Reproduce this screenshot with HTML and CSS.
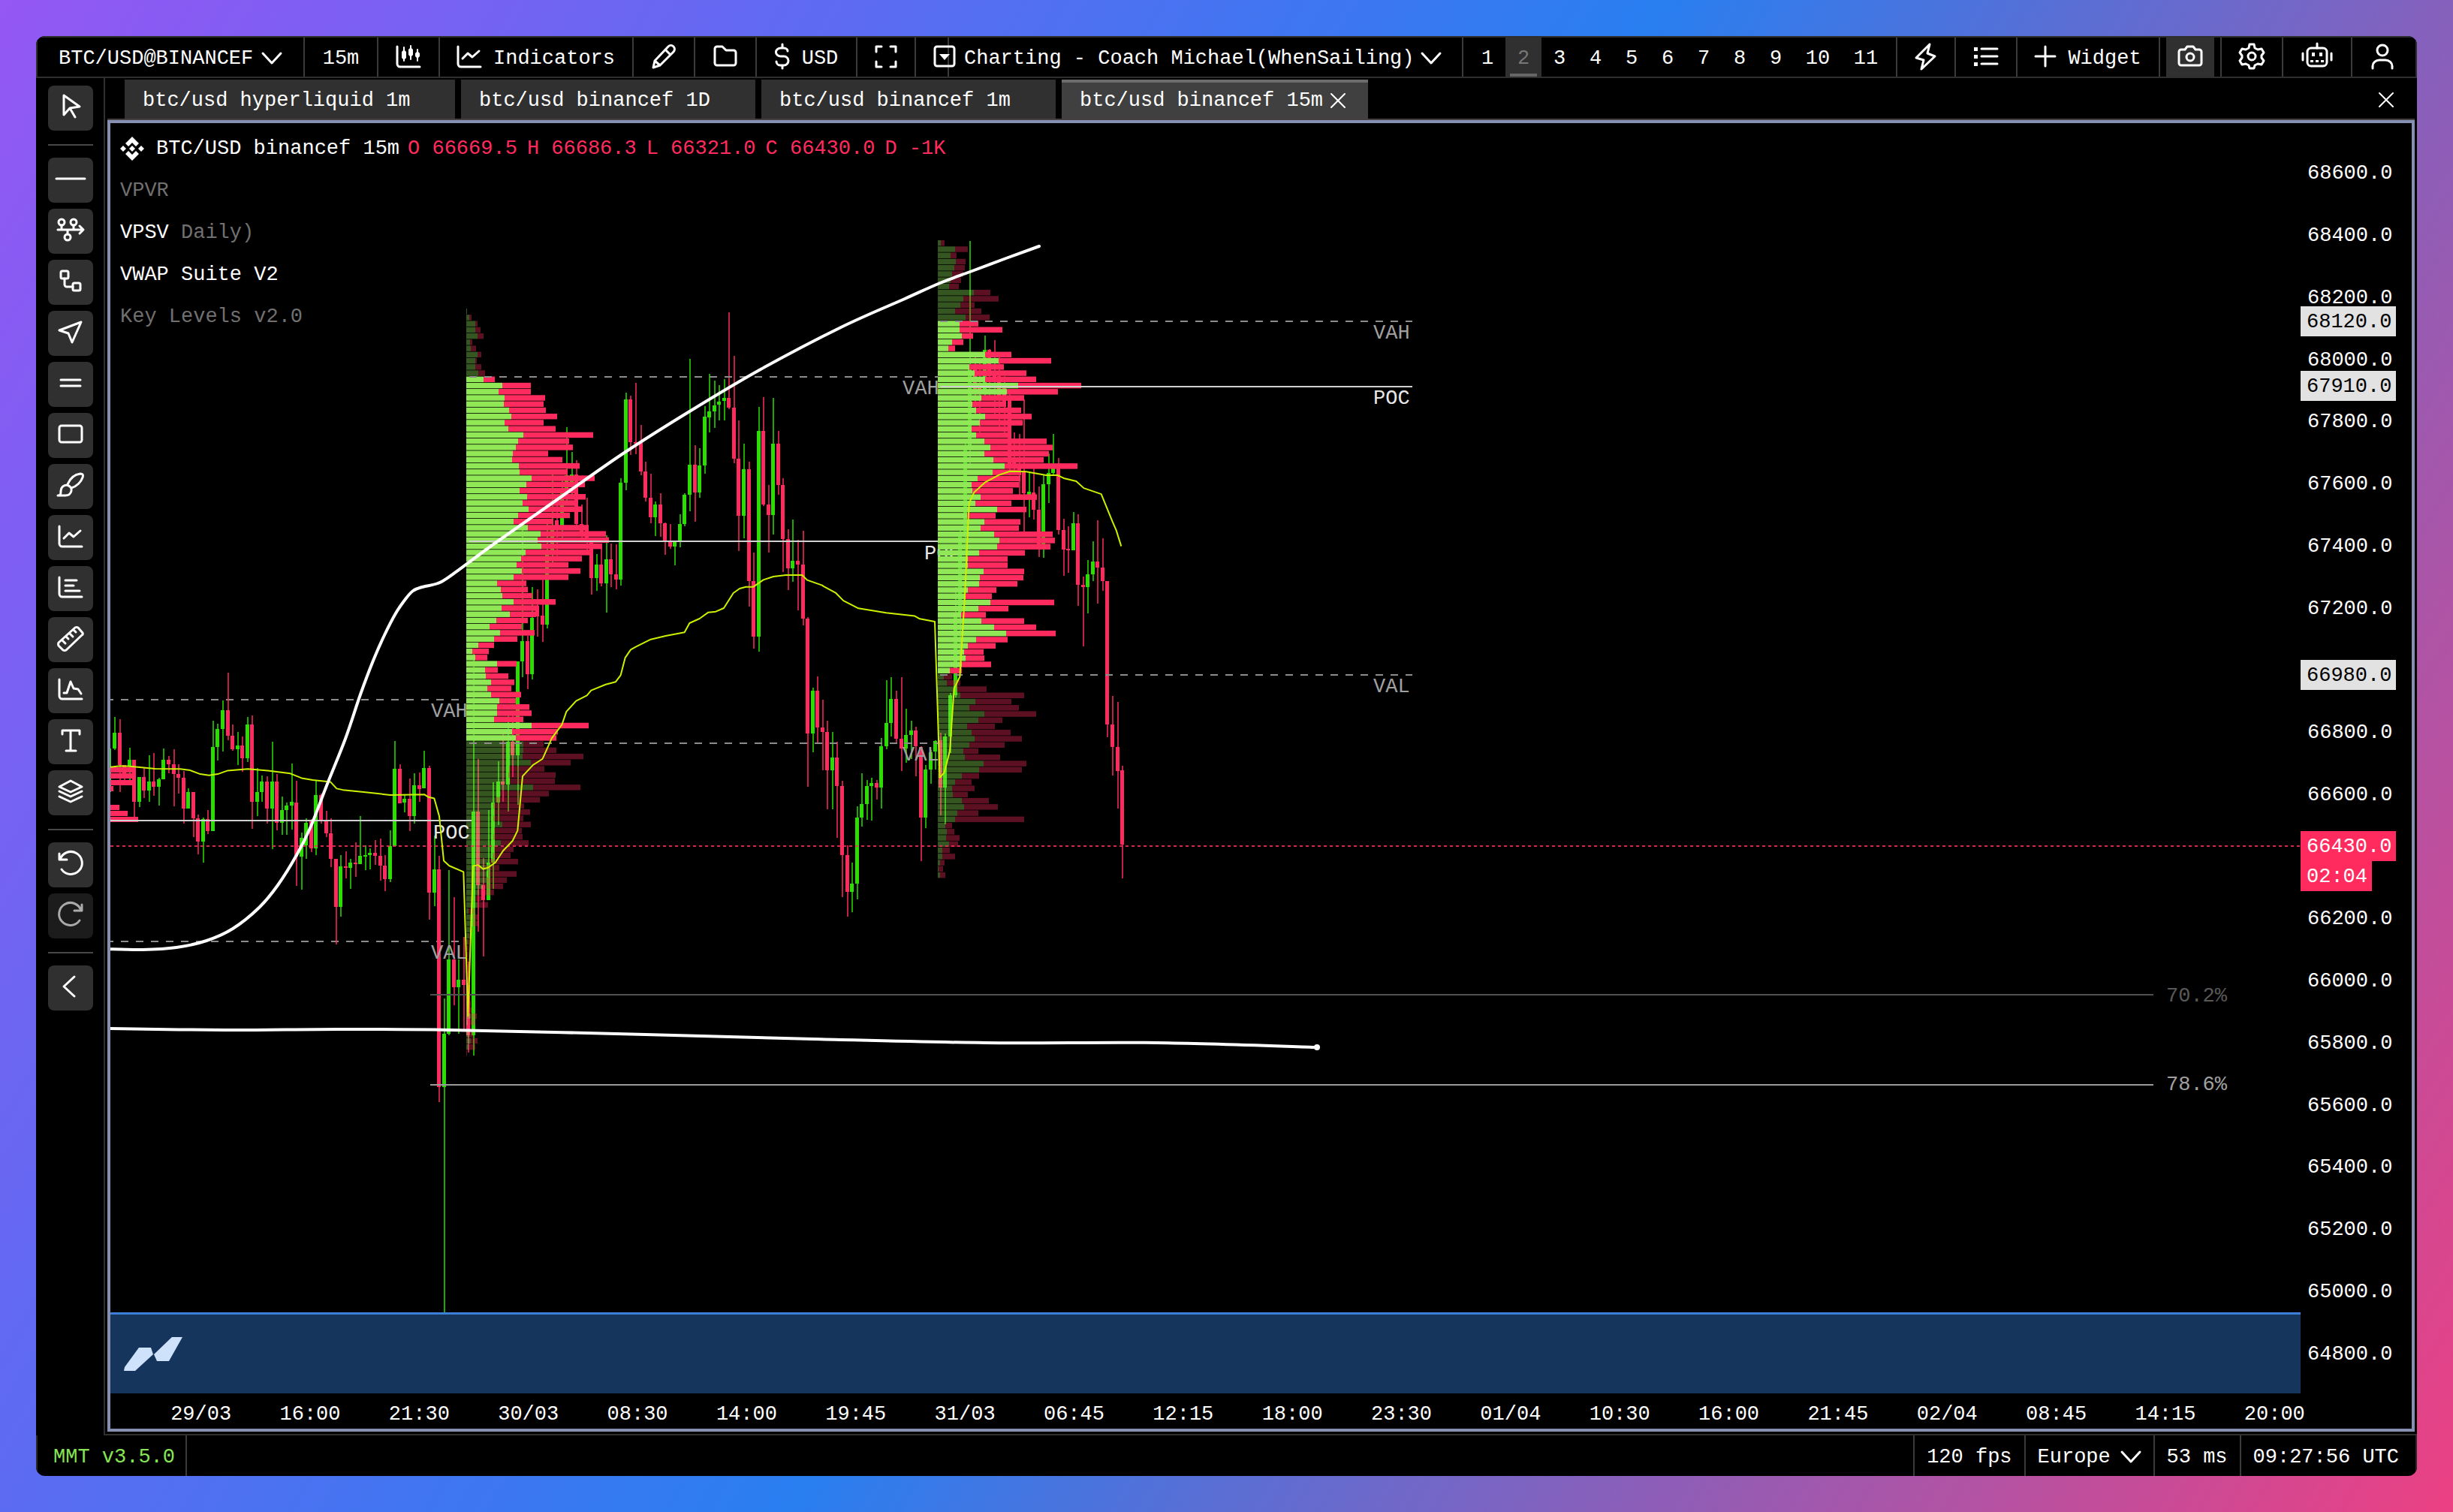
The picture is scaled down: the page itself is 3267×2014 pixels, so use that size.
FILE: index.html
```html
<!DOCTYPE html>
<html lang="en">
<head>
<meta charset="utf-8">
<title>BTC/USD binancef 15m</title>
<link rel="stylesheet" href="styles.css">
</head>
<body>
<svg class="sprite" aria-hidden="true">
  <symbol id="i-chevron" viewBox="0 0 28 16"><path d="M2 1l12 13L26 1"/></symbol>
  <symbol id="i-close" viewBox="0 0 20 20"><path d="M1 1l18 18M19 1L1 19"/></symbol>
  <symbol id="i-candles" viewBox="0 0 32 32"><path d="M1 0v23a4 4 0 0 0 4 4h26"/><path class="thin" d="M10 1v18M19-1v18M28 4v15"/><path class="solid" d="M10 4l3 3v8l-3 3-3-3V7zM19 1l3 3v7l-3 3-3-3V4zM28 6l3 3v4l-3 3-3-3V9z"/></symbol>
  <symbol id="i-line-chart" viewBox="0 0 32 32"><path d="M1 0v23a4 4 0 0 0 4 4h26M7 16l7-7 6 5 9-8"/></symbol>
  <symbol id="i-pencil" viewBox="0 0 32 32"><path d="M2 28l2-9L22 0a4 4 0 0 1 7 7L11 25zM18 4l7 7M4 19l7 6"/></symbol>
  <symbol id="i-folder" viewBox="0 0 32 32"><path d="M5 0h7l5 5h10a3 3 0 0 1 3 3v14a3 3 0 0 1-3 3H5a3 3 0 0 1-3-3V3a3 3 0 0 1 3-3z"/></symbol>
  <symbol id="i-dollar" viewBox="0 0 20 32"><path d="M10-3v5M10 25v4M17 6a5 4 0 0 0-5-4H8a6 5 0 0 0 0 11h4a6 6 0 0 1 0 12H7a5 5 0 0 1-5-5"/></symbol>
  <symbol id="i-frame" viewBox="0 0 28 32"><path d="M1 7V0h7M20 0h7v7M27 20v7h-7M8 27H1v-7"/></symbol>
  <symbol id="i-layout" viewBox="0 0 28 32"><rect x="1" y="0" width="26" height="26" rx="3"/><path class="solid" d="M7 10h14l-7 8z"/></symbol>
  <symbol id="i-bolt" viewBox="0 0 32 32"><path d="M21-3L3 15l10 3-3 12 18-17-10-4z"/></symbol>
  <symbol id="i-list" viewBox="0 0 32 32"><path d="M10 3h21M10 13h21M10 23h21"/><path class="solid" d="M0 1h5v5H0zM0 11h5v5H0zM0 21h5v5H0z"/></symbol>
  <symbol id="i-plus" viewBox="0 0 28 32"><path d="M14 0v26M1 13h26"/></symbol>
  <symbol id="i-camera" viewBox="0 0 32 32"><path d="M4 4h5l3-4h8l3 4h5a3 3 0 0 1 3 3v15a3 3 0 0 1-3 3H4a3 3 0 0 1-3-3V7a3 3 0 0 1 3-3z"/><circle cx="16" cy="14" r="5"/></symbol>
  <symbol id="i-gear" viewBox="0 0 32 32"><path d="M13-3h6l1 5 4 2 5-1 3 5-3 4v3l3 4-3 5-5-1-4 2-1 4h-6l-1-4-4-2-5 1-3-5 3-4v-3L0 8l3-5 5 1 4-2z"/><circle cx="16" cy="13" r="5"/></symbol>
  <symbol id="i-robot" viewBox="0 0 40 32"><rect x="7" y="2" width="26" height="24" rx="5"/><path d="M20-4v6M1 9v9M39 9v9"/><path class="solid" d="M13 8h4v5h-4zM23 8h4v5h-4zM11 18h4v3h-4zM18 18h4v3h-4zM25 18h4v3h-4z"/></symbol>
  <symbol id="i-user" viewBox="0 0 32 32"><circle cx="16" cy="5" r="7"/><path d="M3 29v-3a9 8 0 0 1 9-8h8a9 8 0 0 1 9 8v3"/></symbol>
  <symbol id="i-cursor" viewBox="0 0 32 32"><path d="M7-2l21 15-13 2-8 9zM15 15l7 12"/></symbol>
  <symbol id="i-hline" viewBox="0 0 40 32"><path d="M1 13h38"/></symbol>
  <symbol id="i-nodes" viewBox="0 0 36 32"><circle cx="6" cy="3" r="4"/><circle cx="22" cy="3" r="4"/><circle cx="14" cy="23" r="4"/><path d="M1 13h33M30 8l5 5-5 5M6 7v6M22 7v6M14 13v6"/></symbol>
  <symbol id="i-elbow" viewBox="0 0 32 32"><rect x="3" y="0" width="10" height="10" rx="2"/><rect x="19" y="16" width="10" height="10" rx="2"/><path d="M8 10v8a3 3 0 0 0 3 3h8"/></symbol>
  <symbol id="i-send" viewBox="0 0 32 32"><path d="M1 11L30 0 18 27l-5-12z"/></symbol>
  <symbol id="i-equals" viewBox="0 0 32 32"><path d="M3 9h26M3 17h26"/></symbol>
  <symbol id="i-rect" viewBox="0 0 32 32"><rect x="1" y="2" width="30" height="22" rx="3"/></symbol>
  <symbol id="i-brush" viewBox="0 0 36 32"><path d="M1 27c4 0 4-2 4-6 0-5 4-8 8-8 4 1 7 4 6 8-1 4-4 6-8 6zM14 12c3-7 9-13 17-14 4 0 4 3 3 5-2 6-8 12-15 14"/></symbol>
  <symbol id="i-bars" viewBox="0 0 32 32"><path d="M1 0v22a4 4 0 0 0 4 4h26M9 4h15M9 11h11M9 18h19"/></symbol>
  <symbol id="i-ruler" viewBox="0 0 36 32"><path d="M2 19L24-1q2-1 4 0l6 7q1 2-1 3L12 29q-2 1-4 0l-6-6q-1-2 0-4zM7 16l4 4M12 11l3 3M17 7l4 4M22 2l3 3"/></symbol>
  <symbol id="i-area" viewBox="0 0 32 32"><path d="M1 0v22a4 4 0 0 0 4 4h26M7 18h4l5-15 4 9 6 1 4 6"/></symbol>
  <symbol id="i-text" viewBox="0 0 32 32"><path d="M5 5V0h23v5M16 0v27M10 27h13"/></symbol>
  <symbol id="i-layers" viewBox="0 0 32 32"><path d="M16-1l15 8-15 7L1 7zM1 13l15 7 15-7M1 20l15 7 15-7"/></symbol>
  <symbol id="i-undo" viewBox="0 0 32 32"><path d="M1 0v8h10M2 8a15 15 0 1 1 2 13"/></symbol>
  <symbol id="i-redo" viewBox="0 0 32 32"><path d="M31 0v8H21M30 8a15 15 0 1 0-2 13"/></symbol>
  <symbol id="i-back" viewBox="0 0 32 32"><path d="M21 0L7 13l14 13"/></symbol>
</svg>

<div class="window">
  <header class="topbar">
    <label class="cell symbol"><select class="picker" aria-label="Symbol"><option>BTC/USD@BINANCEF</option></select><svg class="chevron"><use href="#i-chevron"/></svg></label>
    <button class="cell interval">15m</button>
    <button class="cell" aria-label="Chart type"><svg class="icon"><use href="#i-candles"/></svg></button>
    <button class="cell indicators"><svg class="icon"><use href="#i-line-chart"/></svg>Indicators</button>
    <button class="cell" aria-label="Draw"><svg class="icon"><use href="#i-pencil"/></svg></button>
    <button class="cell" aria-label="Open"><svg class="icon"><use href="#i-folder"/></svg></button>
    <button class="cell currency"><svg class="icon slim"><use href="#i-dollar"/></svg>USD</button>
    <button class="cell tight" aria-label="Full screen"><svg class="icon"><use href="#i-frame"/></svg></button>
    <label class="cell workspace"><svg class="icon mid"><use href="#i-layout"/></svg><select class="picker" aria-label="Workspace"><option>Charting - Coach Michael(WhenSailing)</option></select><svg class="chevron"><use href="#i-chevron"/></svg></label>
    <nav class="pages" aria-label="Pages">
      <button class="page">1</button><button class="page current">2</button><button class="page">3</button><button class="page">4</button><button class="page">5</button><button class="page">6</button><button class="page">7</button><button class="page">8</button><button class="page">9</button><button class="page wide">10</button><button class="page wide">11</button>
    </nav>
    <button class="cell tight" aria-label="Quick actions"><svg class="icon"><use href="#i-bolt"/></svg></button>
    <button class="cell" aria-label="List"><svg class="icon"><use href="#i-list"/></svg></button>
    <button class="cell widget"><svg class="icon mid"><use href="#i-plus"/></svg>Widget</button>
    <button class="cell camera" aria-label="Screenshot"><span class="pressed"><svg class="icon"><use href="#i-camera"/></svg></span></button>
    <button class="cell" aria-label="Settings"><svg class="icon"><use href="#i-gear"/></svg></button>
    <button class="cell robot" aria-label="Assistant"><svg class="icon broad"><use href="#i-robot"/></svg></button>
    <button class="cell last" aria-label="Account"><svg class="icon"><use href="#i-user"/></svg></button>
  </header>

  <div class="body">
    <aside class="tools">
      <button class="tool" aria-label="Cursor"><svg class="icon"><use href="#i-cursor"/></svg></button>
      <hr class="rule">
      <button class="tool" aria-label="Horizontal line"><svg class="icon broad"><use href="#i-hline"/></svg></button>
      <button class="tool" aria-label="Timeline"><svg class="icon wide"><use href="#i-nodes"/></svg></button>
      <button class="tool" aria-label="Connector"><svg class="icon"><use href="#i-elbow"/></svg></button>
      <button class="tool" aria-label="Arrow"><svg class="icon"><use href="#i-send"/></svg></button>
      <button class="tool" aria-label="Channel"><svg class="icon"><use href="#i-equals"/></svg></button>
      <button class="tool" aria-label="Rectangle"><svg class="icon"><use href="#i-rect"/></svg></button>
      <button class="tool" aria-label="Brush"><svg class="icon wide"><use href="#i-brush"/></svg></button>
      <button class="tool" aria-label="Trend"><svg class="icon"><use href="#i-line-chart"/></svg></button>
      <button class="tool" aria-label="Volume profile"><svg class="icon"><use href="#i-bars"/></svg></button>
      <button class="tool" aria-label="Measure"><svg class="icon wide"><use href="#i-ruler"/></svg></button>
      <button class="tool" aria-label="Anchored VWAP"><svg class="icon"><use href="#i-area"/></svg></button>
      <button class="tool" aria-label="Text"><svg class="icon"><use href="#i-text"/></svg></button>
      <button class="tool" aria-label="Layers"><svg class="icon"><use href="#i-layers"/></svg></button>
      <hr class="rule">
      <button class="tool" aria-label="Undo"><svg class="icon"><use href="#i-undo"/></svg></button>
      <button class="tool" aria-label="Redo" disabled><svg class="icon"><use href="#i-redo"/></svg></button>
      <hr class="rule">
      <button class="tool" aria-label="Collapse"><svg class="icon"><use href="#i-back"/></svg></button>
    </aside>

    <main class="main">
      <div class="tabs">
        <button class="tab first">btc/usd hyperliquid 1m</button>
        <button class="tab">btc/usd binancef 1D</button>
        <button class="tab">btc/usd binancef 1m</button>
        <button class="tab active">btc/usd binancef 15m<svg class="close"><use href="#i-close"/></svg></button>
        <button class="tab-close" aria-label="Close panel"><svg class="close"><use href="#i-close"/></svg></button>
      </div>

      <section class="chart" aria-label="BTC/USD chart">
        <div class="plot">
          <svg class="canvas" viewBox="147 164 2917 1692" preserveAspectRatio="xMinYMin slice">
            <g id="under"></g>
            <g id="candles"></g>
            <g id="profiles"></g>
            <g id="over"></g>
          </svg>
          <div class="legend">
            <p class="row"><svg class="brand" viewBox="0 0 32 32"><path d="M16 0l9 9-4 4-5-5-5 5-4-4zM16 32l9-9-4-4-5 5-5-5-4 4zM16 12l4 4-4 4-4-4zM4 12l4 4-4 4-4-4zM28 12l4 4-4 4-4-4z"/></svg><span class="name">BTC/USD binancef 15m</span><span class="ohlc"><span>O 66669.5</span><span>H 66686.3</span><span>L 66321.0</span><span>C 66430.0</span><span>D -1K</span></span></p>
            <p class="row muted">VPVR</p>
            <p class="row">VPSV&nbsp;<span class="muted">Daily)</span></p>
            <p class="row">VWAP Suite V2</p>
            <p class="row muted">Key Levels v2.0</p>
          </div>
        </div>
        <div class="price-scale">
          <div class="prices">
            <span>68600.0</span><span>68400.0</span><span>68200.0</span><span>68000.0</span><span>67800.0</span><span>67600.0</span><span>67400.0</span><span>67200.0</span><span></span><span>66800.0</span><span>66600.0</span><span></span><span>66200.0</span><span>66000.0</span><span>65800.0</span><span>65600.0</span><span>65400.0</span><span>65200.0</span><span>65000.0</span><span>64800.0</span>
          </div>
          <span class="tag" style="--price:68120">68120.0</span>
          <span class="tag" style="--price:67910">67910.0</span>
          <span class="tag" style="--price:66980">66980.0</span>
          <div class="tag last-price" style="--price:66430"><span>66430.0</span><span class="countdown">02:04</span></div>
        </div>
        <div class="time-scale">
          <span>29/03</span><span>16:00</span><span>21:30</span><span>30/03</span><span>08:30</span><span>14:00</span><span>19:45</span><span>31/03</span><span>06:45</span><span>12:15</span><span>18:00</span><span>23:30</span><span>01/04</span><span>10:30</span><span>16:00</span><span>21:45</span><span>02/04</span><span>08:45</span><span>14:15</span><span>20:00</span>
        </div>
      </section>
    </main>
  </div>

  <footer class="status">
    <span class="item version">MMT v3.5.0</span>
    <span class="item push">120 fps</span>
    <label class="item region"><select class="picker" aria-label="Region"><option>Europe</option></select><svg class="chevron"><use href="#i-chevron"/></svg></label>
    <span class="item">53 ms</span>
    <span class="item clock">09:27:56 UTC</span>
  </footer>
</div>
<script src="chart.js"></script>
</body>
</html>
```

FILE: styles.css
```css
* { box-sizing: border-box; }

body {
  margin: 0;
  min-height: 100vh;
  padding: 48px;
  display: flex;
  background: linear-gradient(120deg, #9457f4 0%, #297ef0 50%, #ec4083 100%);
  color: #fff;
  font: 27px/32px "Liberation Mono", monospace;
}

button, select {
  font: inherit;
  color: inherit;
  background: none;
  border: 0;
  padding: 0;
  margin: 0;
}

.sprite { position: absolute; width: 0; height: 0; }

.icon, .chevron, .close {
  flex: none;
  fill: none;
  stroke: currentColor;
  stroke-width: 3;
  stroke-linecap: round;
  stroke-linejoin: round;
  overflow: visible;
}
symbol { overflow: visible; }
.solid { fill: currentColor; stroke: none; }
.thin { stroke-width: 2; }
.icon { width: 32px; height: 32px; }
.icon.slim { width: 20px; }
.icon.mid { width: 28px; }
.icon.wide { width: 36px; }
.icon.broad { width: 40px; }
.chevron { width: 28px; height: 16px; }
.close { width: 20px; height: 20px; stroke-width: 2; }
.picker { appearance: none; }

.window {
  flex: 1;
  display: flex;
  flex-direction: column;
  background: #000;
  border-radius: 12px;
  overflow: hidden;
}

/* top bar */
.topbar {
  display: flex;
  height: 56px;
  border: 2px solid #2f2f2f;
}
.cell {
  display: flex;
  align-items: center;
  justify-content: center;
  width: 82px;
  padding: 3px 0 0;
  flex: none;
  border-right: 2px solid #3a3a3a;
}
.cell.symbol { width: 356px; gap: 10px; }
.interval { width: 98px; }
.indicators { width: 258px; gap: 16px; }
.currency { width: 134px; gap: 16px; }
.tight { width: 78px; }
.cell.workspace {
  flex: 1;
  justify-content: flex-start;
  gap: 12px;
  padding-left: 24px;
  background: linear-gradient(#3a3a3a, #3a3a3a) 42px 0 / 2px 100% no-repeat;
}
.workspace .chevron { margin-left: -4px; }
.widget { width: 190px; gap: 16px; }
.robot { width: 92px; }
.cell.last { width: 84px; padding-right: 4px; border-right: 0; }
.cell.camera { padding: 0 8px; }
.pressed {
  flex: 1;
  align-self: stretch;
  display: flex;
  align-items: center;
  justify-content: center;
  padding-top: 3px;
  background: #303030;
}
.pages {
  display: flex;
  padding: 0 8px;
  width: 578px;
  flex: none;
  border-right: 2px solid #3a3a3a;
}
.page { width: 48px; padding-top: 3px; }
.page.wide { width: 64px; }
.page.current {
  color: #777;
  background: linear-gradient(#666, #666) center bottom / 36px 4px no-repeat #303030;
}

/* drawing tools */
.body { flex: 1; display: flex; }
.tools {
  width: 92px;
  padding: 10px 14px 10px 16px;
  display: flex;
  flex-direction: column;
  gap: 8px;
  border-right: 2px solid #303030;
}
.tool {
  width: 60px;
  height: 60px;
  padding-top: 2px;
  display: flex;
  align-items: center;
  justify-content: center;
  border-radius: 8px;
  background: #303030;
}
.tool:disabled { background: #1c1c1c; color: #aaa; }
.rule {
  width: 60px;
  height: 2px;
  margin: 10px 0 8px;
  border: 0;
  background: #484848;
}

/* tabs */
.main {
  flex: 1;
  display: flex;
  flex-direction: column;
  min-width: 0;
  padding: 0 3px 3px;
  border-bottom: 2px solid #303030;
}
.tabs {
  display: flex;
  gap: 8px;
  height: 56px;
  padding: 2px 0 0 23px;
  border-bottom: 2px solid #443f3f;
}
.tab {
  width: 392px;
  padding: 3px 24px 0;
  display: flex;
  align-items: center;
  gap: 12px;
  background: #303030;
  white-space: nowrap;
}
.tab.first { width: 440px; }
.tab.active {
  width: 408px;
  gap: 10px;
  background: linear-gradient(#6c6c6c, #6c6c6c) 0 0 / 100% 4px no-repeat #404040;
}
.tab-close { margin-left: auto; width: 76px; padding-top: 2px; display: flex; align-items: center; justify-content: center; }

/* chart */
.chart {
  flex: 1;
  display: grid;
  grid-template: minmax(0, 1fr) 47px / minmax(0, 1fr) 148px;
  border: 4px solid #8590b2;
}
.plot { position: relative; min-height: 1000px; }
.canvas { position: absolute; inset: 0; width: 100%; height: 100%; overflow: hidden; }
.legend { position: relative; padding: 6px 0 0 13px; }
.row { margin: 0; height: 56px; display: flex; align-items: center; }
.brand { width: 32px; height: 32px; margin-right: 16px; fill: #fff; }
.name { margin-right: 11px; }
.ohlc { display: flex; gap: 13px; color: #ff2b5e; }
.muted { color: #707070; }

.price-scale { position: relative; }
.prices {
  height: 100%;
  padding: 26px 0 11px 9px;
  display: grid;
  grid-template-rows: repeat(20, 1fr);
  align-items: center;
}
.tag {
  position: absolute;
  left: 0;
  top: calc((68757 - var(--price)) / 4090 * 100% - 20px);
  width: 127px;
  height: 40px;
  padding: 5px 0 0 8px;
  background: #e2e2e2;
  color: #000;
}
.last-price { background: #ff2b5e; color: #fff; }
.countdown {
  display: block;
  width: 95px;
  height: 40px;
  margin: 3px 0 0 -8px;
  padding: 5px 0 0 8px;
  background: #ff2b5e;
}
.time-scale {
  grid-column: 1 / 3;
  display: grid;
  grid-template-columns: repeat(20, 1fr);
  padding: 12px 110px 0 48px;
  text-align: center;
}

/* drawn series */
.up { fill: #2bdd00; }
.down { fill: #ff2b5e; }
.wick { opacity: .75; }
.buy { fill: #90e857; }
.sell { fill: #ff2b5e; }
.outside { opacity: .37; }
.level { stroke: #d0d0d0; stroke-width: 2; }
.level.dashed { stroke: #8c8c8c; stroke-dasharray: 10 10; stroke-width: 2; }
.level.faint { stroke: #505050; stroke-width: 2; }
.level.soft { stroke: #9a9a9a; stroke-width: 2; }
.level.price { stroke: #ff2b5e; stroke-width: 2; stroke-dasharray: 4 4; opacity: .85; }
.mark { fill: #a0a0a0; }
.mark.bright { fill: #e8e8e8; }
.mark.faint { fill: #585858; }
.average { fill: none; stroke: #cdf000; stroke-width: 2; stroke-linejoin: round; }
.trend { fill: none; stroke: #fff; stroke-width: 4; stroke-linejoin: round; stroke-linecap: round; }
.tip { fill: #fff; }
.band { fill: #16355c; }
.band-edge { fill: #3d7fd6; }
.logo { fill: #cfe2fb; }

/* status bar */
.status {
  display: flex;
  height: 54px;
  border: solid #2a2a2a;
  border-width: 0 2px;
}
.item {
  display: flex;
  align-items: center;
  padding: 3px 16px 0;
  border-right: 2px solid #3a3a3a;
}
.version { padding-left: 21px; padding-right: 14px; color: #86e455; }
.push { margin-left: auto; border-left: 2px solid #3a3a3a; }
.region { gap: 12px; }
.clock { padding-right: 22px; border-right: 0; }
```

FILE: chart.js
```js
const NS = "http://www.w3.org/2000/svg";

function add(parent, tag, attrs, text) {
  const el = document.createElementNS(NS, tag);
  for (const key in attrs) el.setAttribute(key, attrs[key]);
  if (text) el.textContent = text;
  document.getElementById(parent).appendChild(el);
}

// Each block holds its own vertical origin and scale.
// A row is: direction, high, body top, body bottom, low.
const blocks = [
  { first: -1, y: 880, k: 2.8, rows: `
u 262 327 490 490|u 209 270 327 332|d 217 270 390 490|d 388 390 440 460|u 324 370 395 460|d 370 370 525 590|u 434 434 525 545|d 397 434 484 512|u 353 452 484 525|d 345 452 469 504|u 436 442 469 539|u 327 370 441 441|d 356 370 386 420|d 330 386 423 543|d 385 423 438 495|d 412 438 552 607|u 476 490 552 552|d 490 490 588 657|d 574 588 675 722|u 585 591 675 752|d 556 591 636 647|u 224 321 636 636|u 236 255 321 372|u 147 185 255 339|d 45 185 280 297|d 238 280 330 336|u 267 315 330 388|d 284 315 364 414|u 210 238 364 377|d 205 238 526 627|u 400 489 526 580|u 427 452 489 525|d 431 452 552 607|u 302 452 552 702|d 423 452 604 632|u 508 557 604 650|u 529 540 557 650|u 383 526 541 630|d 447 528 731 839|u 640 660 731 854|u 587 605 690 740|d 590 600 700 715|u 447 500 700 724|d 495 500 600 607|d 560 600 643 657|d 588 643 739 771|d 739 739 919 1057|u 724 767 919 955|d 711 767 773 812|u 740 753 773 851|d 678 753 759 805|u 580 727 759 759|u 689 725 730 780|u 700 717 724 778|d 670 717 727 762|d 664 727 764 819|d 724 764 815 860|u 632 691 815 825|u 299 402 691 691|d 387 402 532 532|u 497 515 529 566|d 440 515 580 635|u 421 465 580 608|d 417 465 478 527|u 337 399 476 476|d 393 399 866 966|u 652 777 866 916|d 728 777 1590 1647|u 1260 1392 1590 2439|u 780 1113 1392 1397|d 882 1113 1217 1285|u 1113 1190 1217 1391|d 1029 1190 1210 1375|d 1124 1210 1397 1461|u -40 563 1396 1472|d 368 563 837 1011|d 737 837 893 1102|u 557 753 893 893|u 453 529 753 852|u 376 451 529 613|d 254 451 462 526|u 194 302 462 563|d 204 302 352 434|u 4 4 352 538` },
  { first: 83, y: 400, k: 3, rows: `
u 880 1362 1443 1505|d 1340 1362 1494 1553|u 1145 1268 1494 1514|d 1156 1220 1262 1343|d 1115 1260 1296 1364|u 880 1000 1296 1310|u 690 900 1000 1060|d 820 880 900 1030|u 720 770 900 960|u 508 700 770 800|u 605 697 740 790|d 640 697 894 900|d 815 894 930 960|d 790 905 960 1000|d 950 960 1111 1175|u 1014 1056 1111 1162|d 980 1056 1131 1143|u 940 1036 1131 1247|d 972 1036 1095 1145|d 976 1095 1117 1155|u 711 730 1117 1140|u 370 396 730 758|d 381 396 568 617|d 330 568 572 616|d 499 570 684 700|d 644 684 788 804|d 692 788 868 892|u 805 816 868 941|d 771 816 891 944|d 889 891 959 1018|d 894 959 984 994|u 962 964 984 1058|u 855 894 962 988|u 771 777 894 902|u 235 657 777 842|d 579 657 768 884|u 592 661 768 789|u 423 465 661 693|u 294 444 467 527|u 320 420 443 510|u 338 404 417 480|u 315 390 403 480|d 48 390 430 435|d 222 430 634 652|d 480 634 861 1001|u 573 674 861 950|d 646 674 1122 1223|d 1007 1122 1345 1391|u 426 523 1345 1403|d 387 523 815 823|d 739 815 857 1007|u 391 572 857 937|d 522 572 738 778|d 710 738 955 1087|d 916 955 1072 1157|u 877 1041 1072 1124|d 958 1041 1055 1238|d 921 1056 1272 1298` },
  { first: 141, y: 400, k: 1.8667, rows: `
d 787 791 1078 1210|u 964 971 1078 1124|d 935 971 1063 1102|d 993 1063 1073 1169|d 1046 1073 1168 1265|u 1074 1137 1168 1266|d 1098 1137 1207 1336|d 1194 1207 1379 1484|d 1355 1379 1471 1532|u 1399 1450 1471 1522|u 1259 1287 1450 1490|u 1176 1253 1287 1309|u 1193 1207 1253 1292|u 1188 1201 1207 1293|d 1193 1201 1211 1242|u 1089 1108 1211 1263|u 944 1051 1108 1117|u 937 991 1051 1084|d 971 991 1090 1102|d 938 1090 1114 1170|u 1016 1080 1114 1149|u 1046 1069 1080 1140|d 1060 1069 1109 1184|d 1108 1110 1286 1395|u 1155 1167 1286 1312|u 1118 1124 1167 1203|u 1094 1096 1122 1166` },
  { first: 168, y: 300, k: 1.7422, rows: `
d 1178 1196 1305 1370|u 1180 1187 1305 1390|u 1085 1090 1187 1225|u 840 900 1090 1095|u 700 720 900 1000|u 500 520 720 760|u 37 330 520 560|d 300 330 380 450|d 320 370 390 480|u 256 290 390 400|d 288 290 350 400|d 267 340 360 440|d 300 350 400 470|d 350 370 420 480|d 390 400 560 580|d 480 540 560 575|d 484 560 570 626|d 405 570 622 710|u 575 619 626 678|d 565 620 660 683|d 606 660 742 770|u 578 601 742 772|u 530 575 601 645|u 484 560 575 580|d 540 565 707 718|d 682 707 752 813|d 699 751 755 807|u 666 692 754 754|d 671 692 835 884|d 815 835 839 977|u 777 810 840 900|u 733 781 810 826|d 685 781 794 878|d 727 794 825 848|d 825 825 1158 1189|d 1092 1158 1211 1277|d 1107 1211 1266 1353|d 1255 1265 1438 1516` }
];
for (const block of blocks) {
  block.rows.trim().split("|").forEach((row, n) => {
    const [dir, ...v] = row.split(" ");
    const [high, top, bottom, low] = v.map(t => Math.round(Number(t) / block.k + block.y));
    const x = Math.round(150 + 6.547 * (block.first + n));
    const tone = dir === "u" ? "up" : "down";
    add("candles", "rect", { class: tone + " wick", x: x + 2, y: high, width: 2, height: Math.max(low - high, 1) });
    add("candles", "rect", { class: tone, x, y: top, width: 5, height: Math.max(bottom - top, 2) });
  });
}

// Volume profiles: pairs of buy end and total end, in thirds of a pixel from the left edge.
const profiles = [
  { x: 621, y: 411, step: 8.235, edge: 63, from: 11, to: 69, rows: "66,66 75,84 100,108 100,119 107,131 77,88 80,101 107,124 99,105 100,122 110,138 131,177 206,321 191,321 215,378 214,371 235,381 244,426 216,373 231,420 291,570 269,474 261,488 249,390 245,448 273,515 275,468 324,575 303,536 276,495 306,540 288,510 313,527 270,477 251,410 309,551 360,621 349,633 363,605 299,568 283,525 265,471 286,518 252,470 187,303 200,310 207,328 251,421 203,352 237,343 182,308 156,284 198,335 173,267 111,173 87,154 98,146 185,264 138,189 140,232 162,254 147,242 163,283 195,262 185,315 187,325 174,290 324,551 246,429 260,422 290,371 290,422 287,530 321,481 235,374 230,419 236,416 330,518 200,393 180,356 170,293 175,317 172,290 207,320 175,285 170,289 201,311 175,253 168,239 155,269 140,196 150,265 145,226 130,210 115,173 98,123 108,149 72,98 90,110 90,113 80,88 76,84 70,74 66,72 66,72 64,72 64,72 64,74 64,74 64,76 64,76 64,78 66,80 70,84 80,105 70,98 64,80 75,90 82,108 72,98 64,65" },
  { x: 1249, y: 320, step: 8.254, edge: 87, from: 13, to: 69, rows: "98,114 156,207 138,161 159,199 152,196 144,189 137,180 132,171 231,297 189,329 177,234 157,262 198,294 173,248 173,344 183,228 144,189 129,156 276,381 329,540 212,350 235,440 276,479 408,659 363,568 262,431 225,361 240,420 276,462 256,427 222,375 240,378 273,523 296,547 274,532 310,511 354,646 307,420 247,417 223,411 225,387 257,484 237,381 324,442 205,318 273,416 259,411 313,546 332,555 325,537 252,435 207,366 207,366 269,432 255,429 252,406 207,320 198,302 296,552 249,369 181,280 262,432 312,480 359,557 239,366 208,318 192,270 198,272 184,299 135,182 111,145 124,178 163,282 178,431 237,380 213,411 272,479 250,345 205,315 223,378 234,422 214,354 190,248 195,336 270,442 252,424 184,251 156,222 143,235 148,207 183,292 193,328 165,249 157,431 118,144 124,152 121,174 132,169 105,134 106,155 95,113 91,109 95,117" }
];
for (const p of profiles) {
  p.rows.split(" ").forEach((row, n) => {
    const [buy, total] = row.split(",").map(t => Math.round((t - p.edge) / 3));
    const tone = n < p.from || n > p.to ? " outside" : "";
    const y = p.y + p.step * n;
    const height = p.step - 0.8;
    add("profiles", "rect", { class: "buy" + tone, x: p.x, y, width: buy, height });
    add("profiles", "rect", { class: "sell" + tone, x: p.x + buy, y, width: total - buy, height });
  });
}
for (const [y, end] of [[1022, 178], [1030, 178], [1039, 181], [1047, 151], [1072, 159], [1080, 170], [1088, 184]]) {
  add("profiles", "rect", { class: "sell", x: 147, y, width: end - 147, height: 7 });
}

function line(group, kind, x1, x2, y) {
  add(group, "line", { class: "level " + kind, x1, x2, y1: y, y2: y });
}
function mark(group, kind, x, y, text) {
  add(group, "text", { class: "mark " + kind, x, y }, text);
}

// Value area and point of control levels
line("under", "dashed", 141, 621, 932);
line("under", "dashed", 141, 621, 1254);
line("over", "", 147, 628, 1093);
line("over", "dashed", 625, 1249, 502);
line("over", "", 625, 1249, 721);
line("over", "dashed", 625, 1249, 990);
line("over", "dashed", 1252, 1881, 428);
line("over", "", 1252, 1881, 515);
line("over", "dashed", 1252, 1881, 899);
mark("over", "", 574, 955, "VAH");
mark("over", "bright", 577, 1117, "POC");
mark("over", "", 574, 1277, "VAL");
mark("under", "", 1202, 525, "VAH");
mark("under", "bright", 1231, 745, "POC");
mark("over", "", 1202, 1013, "VAL");
mark("over", "", 1829, 451, "VAH");
mark("over", "bright", 1829, 538, "POC");
mark("over", "", 1829, 922, "VAL");

// Retracement levels and last price
line("over", "faint", 573, 2868, 1325);
line("over", "soft", 573, 2868, 1445);
mark("over", "faint", 2885, 1334, "70.2%");
mark("over", "", 2885, 1452, "78.6%");
line("over", "price", 147, 3064, 1127);

// Session average price
const average = [
  [140, 880, 2.8, "7,398 60,393 100,394 200,403 300,404 340,409 380,423 415,428 450,423 490,410 570,404 650,410 740,421 785,438 830,445 900,452 925,477 950,482 1040,491 1140,501 1275,499 1290,508 1315,514 1335,580 1353,746 1375,765 1432,788 1450,1325"],
  [600, 860, 2.8, "90,822 110,818 130,833 150,828 180,808 210,765 248,728 268,690 288,487 330,445 368,422 405,345 445,295 463,246 502,206 545,186 562,167 620,145 660,135 680,110 698,45 720,15"],
  [600, 400, 3, "740,1385 800,1355 860,1341 935,1327 955,1290 995,1272 1030,1247 1060,1244 1092,1230 1130,1170 1155,1152 1180,1145 1210,1145 1250,1117 1290,1104 1340,1098 1405,1098 1425,1118 1485,1139"],
  [820, 400, 1.8667, "830,711 880,728 910,747 970,766 1080,777 1195,785 1215,792 1275,799"],
  [1220, 300, 1.7422, "95,1282 113,1270 135,1220 152,1075 175,1048 195,860 212,645 232,620 275,597 330,580 375,571 440,572 520,580 565,580 590,587 640,594 670,610 740,624 785,688 800,708 820,745"]
];
add("over", "polyline", {
  class: "average",
  points: average.map(([x, y, k, pts]) => pts.split(" ").map(p => {
    const [a, b] = p.split(",");
    return (a / 3 + x) + "," + (b / k + y);
  }).join(" ")).join(" ")
});

// Smooth curve through a list of points
function smooth(points) {
  let d = "M" + points[0];
  for (let i = 0; i < points.length - 1; i++) {
    const a = points[i - 1] || points[i], b = points[i], c = points[i + 1], e = points[i + 2] || c;
    d += `C${b[0] + (c[0] - a[0]) / 6},${b[1] + (c[1] - a[1]) / 6} ${c[0] - (e[0] - b[0]) / 6},${c[1] - (e[1] - b[1]) / 6} ${c}`;
  }
  return d;
}
add("over", "path", { class: "trend", d: smooth([[140, 1264], [190, 1265], [235, 1262], [275, 1253], [310, 1237], [345, 1209], [370, 1179], [395, 1139], [413, 1103], [436, 1044], [460, 984], [480, 925], [497, 880], [512, 846], [527, 817], [540, 798], [550, 787], [562, 782], [583, 777], [600, 767], [660, 723], [747, 662], [830, 604], [920, 547], [1013, 492], [1120, 436], [1205, 398], [1252, 377], [1292, 362], [1340, 344], [1384, 328]]) });
add("over", "path", { class: "trend", d: smooth([[140, 1370], [300, 1372], [450, 1371], [600, 1372], [860, 1378], [1083, 1384], [1312, 1389], [1541, 1389], [1754, 1395]]) });
add("over", "circle", { class: "tip", cx: 1754, cy: 1395, r: 4 });

// Bottom panel
add("over", "rect", { class: "band", x: 147, y: 1750, width: 2917, height: 106 });
add("over", "rect", { class: "band-edge", x: 147, y: 1748, width: 2917, height: 3 });
add("over", "path", { class: "logo", d: "M165 1826l1-5 19-26h16l3 9-24 22zM205 1804l4 9h16l18-32h-14z" });
```
